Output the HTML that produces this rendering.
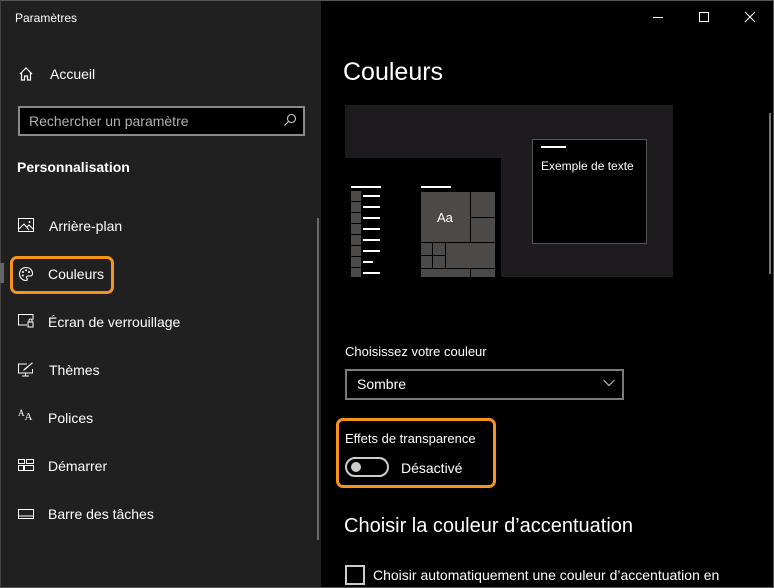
<!DOCTYPE html>
<html><head><meta charset="utf-8"><style>
*{margin:0;padding:0;box-sizing:border-box}
body{width:774px;height:588px;background:#000;position:relative;overflow:hidden;font-family:"Liberation Sans",sans-serif;color:#fff}
.a{position:absolute}
.side{left:0;top:0;width:321px;height:588px;background:#202020}
.t{position:absolute;font-size:14px;white-space:nowrap}
.ic{position:absolute;left:18px}
.bl{background:#fff;height:2px;position:absolute}
.tile{position:absolute;background:#4c4a48}
</style></head><body>
<div class="a side"></div>
<div class="a" style="left:0;top:0;width:774px;height:1px;background:#555"></div>
<div class="a" style="left:0;top:587px;width:774px;height:1px;background:#555"></div>
<div class="a" style="left:773px;top:0;width:1px;height:588px;background:#555"></div>
<div class="a" style="left:0;top:0;width:1px;height:588px;background:#444"></div>
<div class="t" style="left:15px;top:11px;font-size:12px">Paramètres</div>
<!-- window controls -->
<div class="a" style="left:653px;top:17px;width:10px;height:1px;background:#fff"></div>
<div class="a" style="left:699px;top:12px;width:10px;height:10px;border:1px solid #fff"></div>
<svg class="a" style="left:744px;top:11px" width="12" height="12"><path d="M1 1L11 11M11 1L1 11" stroke="#fff" stroke-width="1"/></svg>
<!-- sidebar -->
<svg class="ic" style="top:66px" width="16" height="16" viewBox="0 0 16 16"><path d="M2 8L8 2L14 8M3.5 7V14H6.5V10H9.5V14H12.5V7" fill="none" stroke="#fff" stroke-width="1.2"/></svg>
<div class="t" style="left:50px;top:66px">Accueil</div>
<div class="a" style="left:18px;top:106px;width:287px;height:30px;border:2px solid #8a8a8a;background:#000"></div>
<div class="t" style="left:29px;top:113px;color:#b0b0b0">Rechercher un paramètre</div>
<svg class="a" style="left:283px;top:113px" width="14" height="14" viewBox="0 0 14 14"><circle cx="8.5" cy="5.5" r="4" fill="none" stroke="#ccc" stroke-width="1.1"/><path d="M5.5 8.5L1.5 12.5" stroke="#ccc" stroke-width="1.2"/></svg>
<div class="t" style="left:17px;top:159px;font-weight:bold">Personnalisation</div>
<div class="a" style="left:317px;top:218px;width:2px;height:322px;background:#6a6a6a"></div>
<svg class="ic" style="top:218px" width="16" height="14" viewBox="0 0 16 14"><rect x="0.5" y="0.5" width="15" height="13" fill="none" stroke="#fff"/><path d="M1 11L6 6L11 12M9 9L11 7L15 11" fill="none" stroke="#fff"/><circle cx="11.5" cy="4" r="1" fill="#fff"/></svg>
<div class="t" style="left:49px;top:218px">Arrière-plan</div>
<div class="a" style="left:0;top:263px;width:4px;height:20px;background:#666"></div>
<div class="a" style="left:10px;top:256px;width:104px;height:38px;border:3px solid #f7941d;border-radius:7px"></div>
<svg class="ic" style="top:266px" width="16" height="16" viewBox="0 0 16 16"><path d="M8 1.5C4 1.5 1.5 4.5 1.5 8C1.5 11.5 4.5 14.5 8 14.5C9.5 14.5 9.5 13 8.8 12.2C8 11.3 8.6 10 10 10H12C13.6 10 14.5 9 14.5 7.5C14.5 4 11.5 1.5 8 1.5Z" fill="none" stroke="#fff" stroke-width="1.1"/><circle cx="5" cy="6" r="1" fill="#fff"/><circle cx="8" cy="4.3" r="1" fill="#fff"/><circle cx="11" cy="6" r="1" fill="#fff"/><circle cx="4.8" cy="9.5" r="1" fill="#fff"/></svg>
<div class="t" style="left:48px;top:266px">Couleurs</div>
<svg class="ic" style="top:314px" width="16" height="14" viewBox="0 0 16 14"><path d="M9 11H0.5V0.5H15V6" fill="none" stroke="#fff"/><rect x="10" y="8" width="5" height="5" fill="none" stroke="#fff"/><path d="M11 8V6.5A1.5 1.5 0 0 1 14 6.5V8" fill="none" stroke="#fff"/></svg>
<div class="t" style="left:48px;top:314px">Écran de verrouillage</div>
<svg class="ic" style="top:362px" width="16" height="16" viewBox="0 0 16 16"><path d="M9 2H0.5V11H14.5V7M4 14H11M7.5 11V14" fill="none" stroke="#fff"/><path d="M5 9L7 8L15 1L14 0.5L6 7Z" fill="#fff"/></svg>
<div class="t" style="left:49px;top:362px">Thèmes</div>
<div class="t" style="left:18px;top:411px;font-family:'Liberation Serif',serif;font-size:11px"><span style="position:relative;top:-4px;font-size:9px">A</span>A</div>
<div class="t" style="left:48px;top:410px">Polices</div>
<svg class="ic" style="top:459px" width="16" height="12" viewBox="0 0 16 12"><rect x="0.5" y="0.5" width="6" height="4" fill="none" stroke="#fff"/><rect x="8.5" y="0.5" width="7" height="4" fill="none" stroke="#fff"/><rect x="0.5" y="6.5" width="5" height="5" fill="none" stroke="#fff"/><rect x="6.5" y="6.5" width="9" height="5" fill="none" stroke="#fff"/></svg>
<div class="t" style="left:48px;top:458px">Démarrer</div>
<svg class="ic" style="top:509px" width="16" height="10" viewBox="0 0 16 10"><rect x="0.5" y="0.5" width="15" height="9" fill="none" stroke="#fff"/><path d="M0.5 7H15.5" stroke="#fff"/></svg>
<div class="t" style="left:48px;top:506px">Barre des tâches</div>
<!-- right -->
<div class="t" style="left:343px;top:58px;font-size:25px">Couleurs</div>
<div class="a" style="left:345px;top:105px;width:328px;height:172px;background:#1e1b1f"></div>
<div class="a" style="left:345px;top:158px;width:156px;height:119px;background:#000"></div>
<div class="a" style="left:532px;top:139px;width:115px;height:105px;background:#000;border:1px solid #555"></div>
<div class="bl" style="left:541px;top:146px;width:25px"></div>
<div class="t" style="left:541px;top:159px;font-size:12px">Exemple de texte</div>
<div class="bl" style="left:351px;top:186px;width:30px"></div>
<div class="bl" style="left:421px;top:186px;width:30px"></div>
<div class="a" style="left:351px;top:191px;width:10px;height:86px;background:repeating-linear-gradient(#4c4a48 0 10px,#000 10px 11px)"></div>
<div class="bl" style="left:363px;top:195px;width:17px"></div>
<div class="bl" style="left:363px;top:206px;width:17px"></div>
<div class="bl" style="left:363px;top:217px;width:17px"></div>
<div class="bl" style="left:363px;top:228px;width:17px"></div>
<div class="bl" style="left:363px;top:239px;width:17px"></div>
<div class="bl" style="left:363px;top:250px;width:17px"></div>
<div class="bl" style="left:363px;top:261px;width:10px"></div>
<div class="bl" style="left:363px;top:272px;width:17px"></div>
<div class="tile" style="left:421px;top:192px;width:49px;height:50px"></div>
<div class="t" style="left:437px;top:210px;font-size:13px">Aa</div>
<div class="tile" style="left:471px;top:192px;width:24px;height:25px"></div>
<div class="tile" style="left:471px;top:218px;width:24px;height:24px"></div>
<div class="tile" style="left:421px;top:243px;width:11px;height:12px"></div>
<div class="tile" style="left:433px;top:243px;width:12px;height:12px"></div>
<div class="tile" style="left:421px;top:256px;width:11px;height:12px"></div>
<div class="tile" style="left:433px;top:256px;width:12px;height:12px"></div>
<div class="tile" style="left:446px;top:243px;width:49px;height:25px"></div>
<div class="tile" style="left:421px;top:269px;width:49px;height:8px"></div>
<div class="tile" style="left:471px;top:269px;width:24px;height:8px"></div>
<div class="a" style="left:769px;top:113px;width:2px;height:161px;background:#777"></div>
<div class="t" style="left:345px;top:344px;font-size:13px">Choisissez votre couleur</div>
<div class="a" style="left:345px;top:369px;width:279px;height:31px;border:2px solid #7a7a7a"></div>
<div class="t" style="left:357px;top:376px">Sombre</div>
<svg class="a" style="left:603px;top:379px" width="12" height="8"><path d="M0.5 1L6 6.5L11.5 1" fill="none" stroke="#ccc"/></svg>
<div class="a" style="left:336px;top:418px;width:160px;height:70px;border:3px solid #f7941d;border-radius:7px"></div>
<div class="t" style="left:345px;top:431px;font-size:13px">Effets de transparence</div>
<div class="a" style="left:345px;top:457px;width:44px;height:20px;border:2px solid #ccc;border-radius:10px"></div>
<div class="a" style="left:351px;top:462px;width:10px;height:10px;border-radius:5px;background:#ccc"></div>
<div class="t" style="left:401px;top:460px;font-size:14px">Désactivé</div>
<div class="t" style="left:344px;top:515px;font-size:20px">Choisir la couleur d’accentuation</div>
<div class="a" style="left:345px;top:565px;width:20px;height:20px;border:2px solid #ccc"></div>
<div class="t" style="left:373px;top:567px;font-size:14px">Choisir automatiquement une couleur d’accentuation en</div>
</body></html>
